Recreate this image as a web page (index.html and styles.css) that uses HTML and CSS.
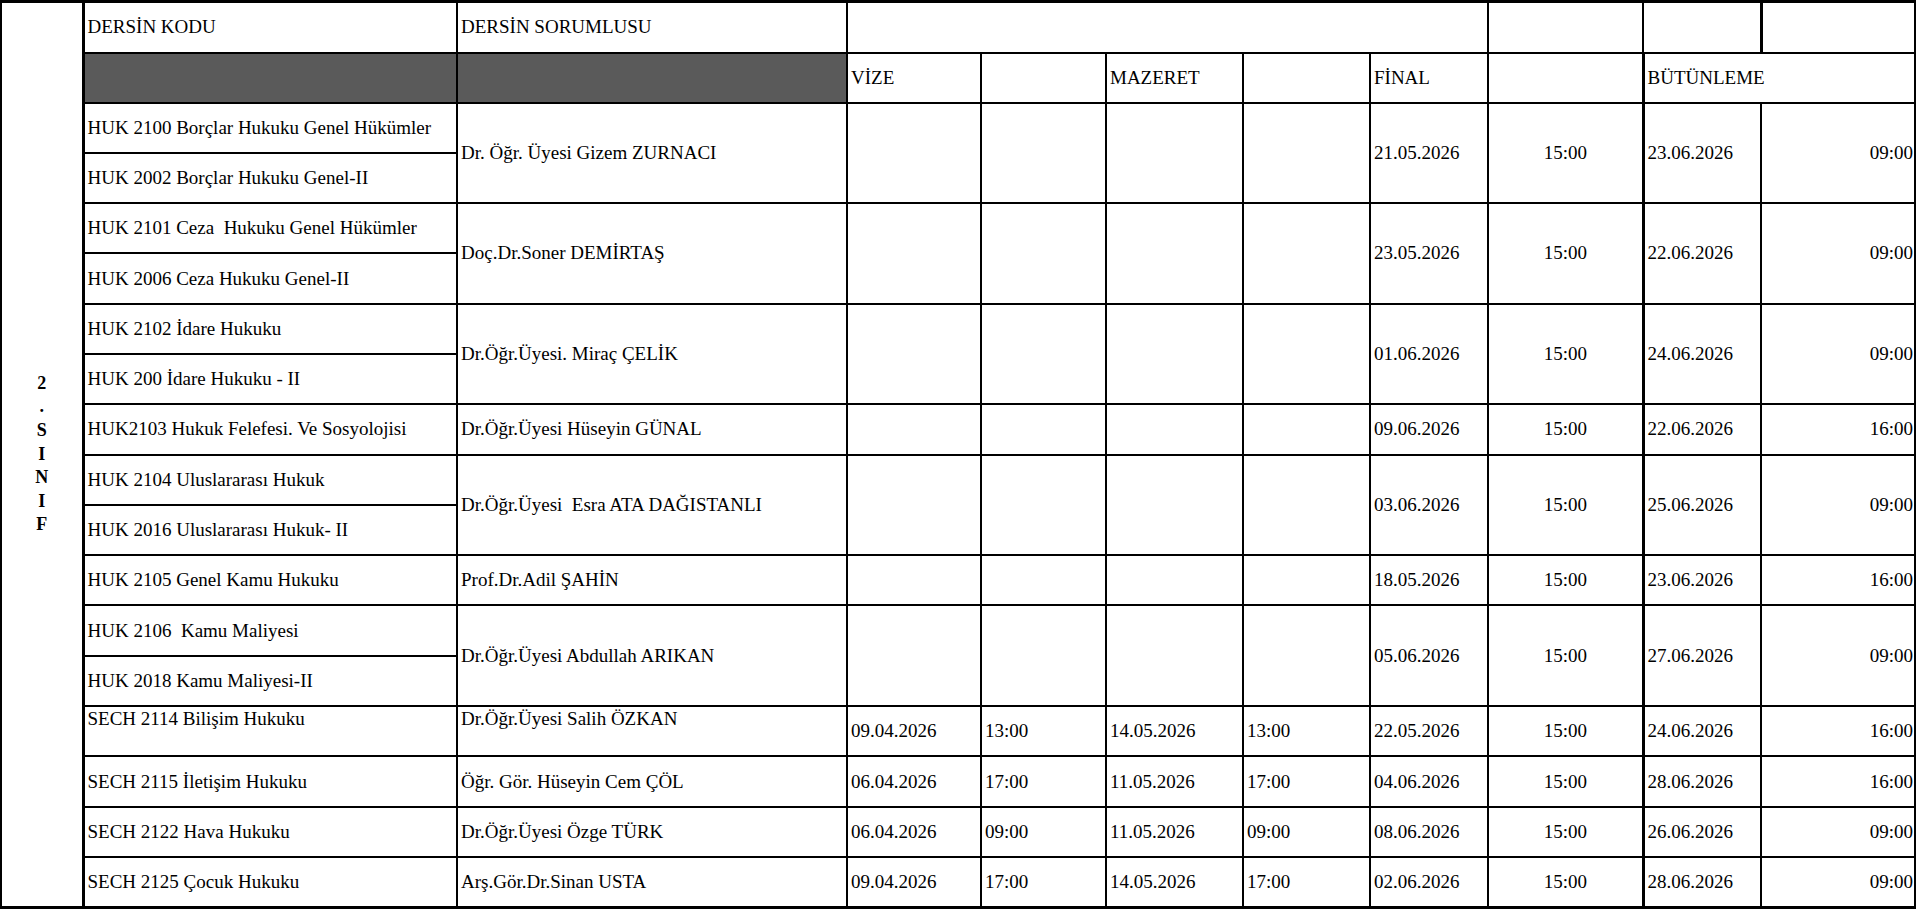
FILE: index.html
```html
<!DOCTYPE html>
<html lang="tr">
<head>
<meta charset="utf-8">
<title>2. Sınıf Sınav Programı</title>
<link rel="stylesheet" href="styles.css">
</head>
<body>
<table class="sched">
  <colgroup>
    <col class="w-sinif"><col class="w-kod"><col class="w-sor">
    <col class="w-vd"><col class="w-vt"><col class="w-md"><col class="w-mt">
    <col class="w-fd"><col class="w-ft"><col class="w-bd"><col class="w-bt">
  </colgroup>
  <tr class="hrow first">
    <td class="sinif" rowspan="18"><div class="stack"><span>2</span><span>.</span><span>S</span><span>I</span><span>N</span><span>I</span><span>F</span></div></td>
    <td>DERSİN KODU</td>
    <td>DERSİN SORUMLUSU</td>
    <td colspan="5"></td>
    <td></td>
    <td class="thick-r"></td>
    <td></td>
  </tr>
  <tr class="hrow second">
    <td class="gray"></td>
    <td class="gray"></td>
    <td>VİZE</td>
    <td></td>
    <td>MAZERET</td>
    <td></td>
    <td>FİNAL</td>
    <td></td>
    <td colspan="2" class="but">BÜTÜNLEME</td>
  </tr>

  <tr class="sub">
    <td>HUK 2100 Borçlar Hukuku Genel Hükümler</td>
    <td rowspan="2">Dr. Öğr. Üyesi Gizem ZURNACI</td>
    <td rowspan="2"></td><td rowspan="2"></td><td rowspan="2"></td><td rowspan="2"></td>
    <td rowspan="2">21.05.2026</td><td rowspan="2" class="c thick-r">15:00</td>
    <td rowspan="2">23.06.2026</td><td rowspan="2" class="r">09:00</td>
  </tr>
  <tr class="sub"><td>HUK 2002 Borçlar Hukuku Genel-II</td></tr>

  <tr class="sub">
    <td>HUK 2101 Ceza&nbsp; Hukuku Genel Hükümler</td>
    <td rowspan="2">Doç.Dr.Soner DEMİRTAŞ</td>
    <td rowspan="2"></td><td rowspan="2"></td><td rowspan="2"></td><td rowspan="2"></td>
    <td rowspan="2">23.05.2026</td><td rowspan="2" class="c thick-r">15:00</td>
    <td rowspan="2">22.06.2026</td><td rowspan="2" class="r">09:00</td>
  </tr>
  <tr class="sub"><td>HUK 2006 Ceza Hukuku Genel-II</td></tr>

  <tr class="sub">
    <td>HUK 2102 İdare Hukuku</td>
    <td rowspan="2">Dr.Öğr.Üyesi. Miraç ÇELİK</td>
    <td rowspan="2"></td><td rowspan="2"></td><td rowspan="2"></td><td rowspan="2"></td>
    <td rowspan="2">01.06.2026</td><td rowspan="2" class="c thick-r">15:00</td>
    <td rowspan="2">24.06.2026</td><td rowspan="2" class="r">09:00</td>
  </tr>
  <tr class="sub"><td>HUK 200 İdare Hukuku - II</td></tr>

  <tr class="sub">
    <td>HUK2103 Hukuk Felefesi. Ve Sosyolojisi</td>
    <td>Dr.Öğr.Üyesi Hüseyin GÜNAL</td>
    <td></td><td></td><td></td><td></td>
    <td>09.06.2026</td><td class="c thick-r">15:00</td>
    <td>22.06.2026</td><td class="r">16:00</td>
  </tr>

  <tr class="sub">
    <td>HUK 2104 Uluslararası Hukuk</td>
    <td rowspan="2">Dr.Öğr.Üyesi&nbsp; Esra ATA DAĞISTANLI</td>
    <td rowspan="2"></td><td rowspan="2"></td><td rowspan="2"></td><td rowspan="2"></td>
    <td rowspan="2">03.06.2026</td><td rowspan="2" class="c thick-r">15:00</td>
    <td rowspan="2">25.06.2026</td><td rowspan="2" class="r">09:00</td>
  </tr>
  <tr class="sub"><td>HUK 2016 Uluslararası Hukuk- II</td></tr>

  <tr class="sub">
    <td>HUK 2105 Genel Kamu Hukuku</td>
    <td>Prof.Dr.Adil ŞAHİN</td>
    <td></td><td></td><td></td><td></td>
    <td>18.05.2026</td><td class="c thick-r">15:00</td>
    <td>23.06.2026</td><td class="r">16:00</td>
  </tr>

  <tr class="sub">
    <td>HUK 2106&nbsp; Kamu Maliyesi</td>
    <td rowspan="2">Dr.Öğr.Üyesi Abdullah ARIKAN</td>
    <td rowspan="2"></td><td rowspan="2"></td><td rowspan="2"></td><td rowspan="2"></td>
    <td rowspan="2">05.06.2026</td><td rowspan="2" class="c thick-r">15:00</td>
    <td rowspan="2">27.06.2026</td><td rowspan="2" class="r">09:00</td>
  </tr>
  <tr class="sub"><td>HUK 2018 Kamu Maliyesi-II</td></tr>

  <tr class="sub">
    <td class="top">SECH 2114 Bilişim Hukuku</td>
    <td class="top">Dr.Öğr.Üyesi Salih ÖZKAN</td>
    <td>09.04.2026</td><td>13:00</td><td>14.05.2026</td><td>13:00</td>
    <td>22.05.2026</td><td class="c thick-r">15:00</td>
    <td>24.06.2026</td><td class="r">16:00</td>
  </tr>
  <tr class="sub">
    <td>SECH 2115 İletişim Hukuku</td>
    <td>Öğr. Gör. Hüseyin Cem ÇÖL</td>
    <td>06.04.2026</td><td>17:00</td><td>11.05.2026</td><td>17:00</td>
    <td>04.06.2026</td><td class="c thick-r">15:00</td>
    <td>28.06.2026</td><td class="r">16:00</td>
  </tr>
  <tr class="sub">
    <td>SECH 2122 Hava Hukuku</td>
    <td>Dr.Öğr.Üyesi Özge TÜRK</td>
    <td>06.04.2026</td><td>09:00</td><td>11.05.2026</td><td>09:00</td>
    <td>08.06.2026</td><td class="c thick-r">15:00</td>
    <td>26.06.2026</td><td class="r">09:00</td>
  </tr>
  <tr class="sub">
    <td>SECH 2125 Çocuk Hukuku</td>
    <td>Arş.Gör.Dr.Sinan USTA</td>
    <td>09.04.2026</td><td>17:00</td><td>14.05.2026</td><td>17:00</td>
    <td>02.06.2026</td><td class="c thick-r">15:00</td>
    <td>28.06.2026</td><td class="r">09:00</td>
  </tr>
</table>
</body>
</html>
```
FILE: styles.css
```css
html, body {
  margin: 0;
  padding: 0;
  background: #fff;
}

body {
  font-family: "Liberation Serif", "Times New Roman", serif;
  font-size: 19px;
  color: #000;
}

.sched {
  border-collapse: collapse;
  table-layout: fixed;
  width: 1916px;
  border-top: 3px solid #000;
  border-bottom: 3px solid #000;
  border-left: 2px solid #000;
  border-right: 2px solid #000;
}

.w-sinif { width: 82px; }
.w-kod { width: 374px; }
.w-sor { width: 390px; }
.w-vd { width: 134px; }
.w-vt { width: 125px; }
.w-md { width: 137px; }
.w-mt { width: 127px; }
.w-fd { width: 118px; }
.w-ft { width: 155px; }
.w-bd { width: 118px; }
.w-bt { width: 154px; }

.sched td {
  border: 2px solid #000;
  padding: 0 3px;
  vertical-align: middle;
  text-align: left;
  white-space: nowrap;
  overflow: hidden;
  line-height: 22px;
}

.hrow.first { height: 51px; }
.hrow.second { height: 50px; }
.sub { height: 50.3px; }

.sched td.sinif {
  border-right: 3px solid #000;
  text-align: center;
  padding: 0;
}

.stack {
  display: flex;
  flex-direction: column;
  align-items: center;
  font-weight: bold;
  font-size: 18px;
  line-height: 23.6px;
}

.sched td.gray {
  background: #5a5a5a;
}

.sched td.thick-r {
  border-right: 3px solid #000;
}

.sched td.c { text-align: center; }

.sched td.r {
  text-align: right;
  padding-right: 1px;
}

.sched td.top {
  vertical-align: top;
  padding-top: 1px;
}

.sched td.but {
  border-left: 3px solid #000;
}
```
